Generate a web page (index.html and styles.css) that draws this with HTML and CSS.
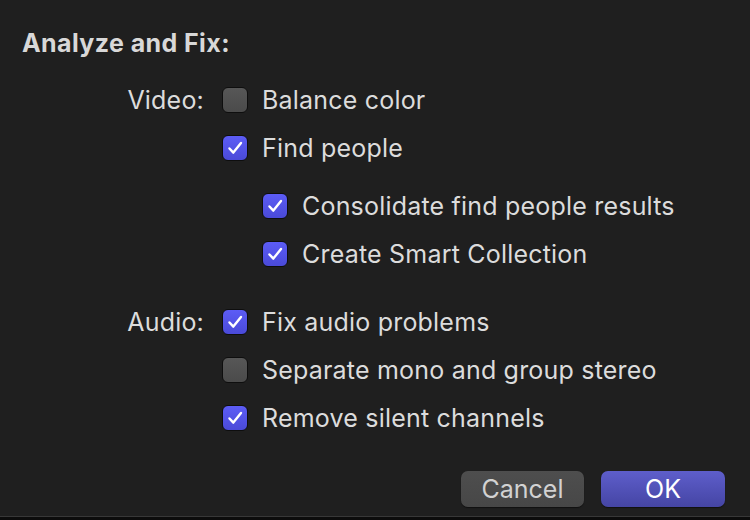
FILE: index.html
```html
<!DOCTYPE html>
<html>
<head>
<meta charset="utf-8">
<link rel="stylesheet" href="styles.css">
</head>
<body>
<div class="dialog">
  <h1 class="title">Analyze and Fix:</h1>
  <div class="options">
    <div class="group">
      <div class="label">Video:</div>
      <div class="items">
        <div class="row"><span class="box"></span><span>Balance color</span></div>
        <div class="row"><span class="box on"><svg viewBox="0 0 26 26"><path d="M7 13.5 L11.2 18 L19.5 7.5"/></svg></span><span>Find people</span></div>
        <div class="sub">
          <div class="row"><span class="box on"><svg viewBox="0 0 26 26"><path d="M7 13.5 L11.2 18 L19.5 7.5"/></svg></span><span>Consolidate find people results</span></div>
          <div class="row"><span class="box on"><svg viewBox="0 0 26 26"><path d="M7 13.5 L11.2 18 L19.5 7.5"/></svg></span><span>Create Smart Collection</span></div>
        </div>
      </div>
    </div>
    <div class="group audio">
      <div class="label">Audio:</div>
      <div class="items">
        <div class="row"><span class="box on"><svg viewBox="0 0 26 26"><path d="M7 13.5 L11.2 18 L19.5 7.5"/></svg></span><span>Fix audio problems</span></div>
        <div class="row"><span class="box"></span><span>Separate mono and group stereo</span></div>
        <div class="row"><span class="box on"><svg viewBox="0 0 26 26"><path d="M7 13.5 L11.2 18 L19.5 7.5"/></svg></span><span>Remove silent channels</span></div>
      </div>
    </div>
  </div>
  <div class="actions">
    <button class="btn cancel">Cancel</button>
    <button class="btn ok">OK</button>
  </div>
</div>
</body>
</html>
```
FILE: styles.css
```css
html, body {
  margin: 0;
  padding: 0;
  background: #0c0c0c;
  height: 520px;
  overflow: hidden;
}
body {
  font-family: Inter, "Liberation Sans", sans-serif;
  color: #dcdcdc;
}
.dialog {
  height: 517px;
  box-sizing: border-box;
  background: #1f1f1f;
  border-bottom: 1px solid #383838;
  padding: 31px 25px 0 22px;
  display: flex;
  flex-direction: column;
}
.title {
  margin: 0;
  font-size: 25px;
  line-height: 24px;
  font-weight: 700;
  letter-spacing: 0.4px;
  color: #d8d8d8;
}
.options {
  margin-top: 21px;
}
.group {
  display: flex;
  gap: 18px;
}
.group.audio {
  margin-top: 20px;
}
.label {
  width: 182px;
  text-align: right;
  font-size: 25px;
  letter-spacing: 0.2px;
  line-height: 48px;
}
.row {
  height: 48px;
  display: flex;
  align-items: center;
  gap: 14px;
  font-size: 25px;
  letter-spacing: 0.2px;
}
.sub {
  margin-top: 10px;
  padding-left: 40px;
}
.box {
  width: 26px;
  height: 26px;
  box-sizing: border-box;
  border-radius: 6px;
  border: 1px solid #0e0e0e;
  background: linear-gradient(#575757, #4b4b4b);
  display: flex;
  align-items: center;
  justify-content: center;
  flex: none;
}
.box.on {
  background: linear-gradient(#5c5cf6, #4a4ad8);
}
.box svg {
  width: 26px;
  height: 26px;
}
.box svg path {
  fill: none;
  stroke: #ffffff;
  stroke-width: 2.6;
  stroke-linecap: round;
  stroke-linejoin: round;
}
.actions {
  margin-top: auto;
  padding-bottom: 9px;
  display: flex;
  justify-content: flex-end;
  gap: 17px;
}
.btn {
  height: 36px;
  border-radius: 7px;
  border: none;
  font-family: Inter, "Liberation Sans", sans-serif;
  font-size: 25px;
  padding: 0;
  box-shadow: 0 1px 1px rgba(0,0,0,0.5);
}
.cancel {
  width: 123px;
  background: linear-gradient(#4e4e4e, #474747);
  color: #d2d2d2;
}
.ok {
  width: 124px;
  background: linear-gradient(#5e5ecb, #4545a4);
  color: #ffffff;
}
```
